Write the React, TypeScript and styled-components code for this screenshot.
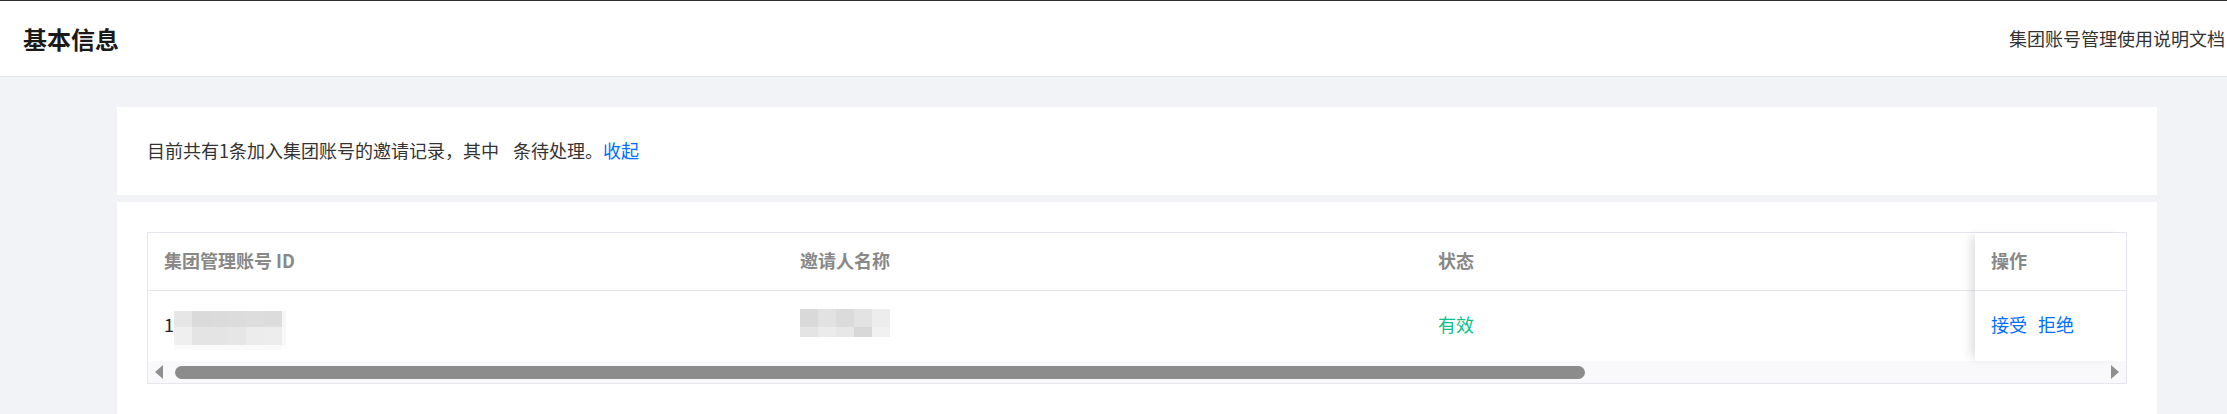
import React from "react";
import styled, { createGlobalStyle } from "styled-components";

const GlobalStyle = createGlobalStyle`
  html, body { margin: 0; padding: 0; }
  body {
    background: #f2f3f7;
    font-family: "Noto Sans CJK SC", "Liberation Sans", sans-serif;
    color: #333;
  }
  * { box-sizing: border-box; }
`;

const Page = styled.div`
  width: 2227px;
  min-height: 414px;
  background: #f2f3f7;
`;

const TopBar = styled.header`
  height: 77px;
  background: #fff;
  border-top: 1px solid #2f2f2f;
  border-bottom: 1px solid #e4e5ec;
  display: flex;
  align-items: center;
  justify-content: space-between;
  padding: 0 2px 0 23px;
`;

const Title = styled.h1`
  margin: 0;
  font-size: 24px;
  line-height: 32px;
  font-weight: 700;
  color: #1a1a1a;
`;

const DocLink = styled.a`
  font-size: 18px;
  line-height: 24px;
  color: #333;
  text-decoration: none;
  margin-top: -2px;
`;

const Main = styled.main`
  padding: 30px 70px 0 117px;
  display: flex;
  flex-direction: column;
  gap: 7px;
`;

const Card = styled.section<{ $pad: string }>`
  background: #fff;
  padding: ${(p) => p.$pad};
`;

const Notice = styled.p`
  margin: 0;
  height: 28px;
  font-size: 18px;
  line-height: 28px;
  color: #333;
  display: flex;
  align-items: center;
  padding-bottom: 3px;
`;

const Blank = styled.span`
  display: inline-block;
  width: 14px;
`;

const TextLink = styled.a`
  color: #006eff;
  text-decoration: none;
  cursor: pointer;
`;

const TableBox = styled.div`
  border: 1px solid #e6e7ee;
  display: flex;
  flex-direction: column;
  background: #fff;
`;

const TableBody = styled.div`
  display: flex;
`;

const ScrollPane = styled.div`
  flex: 1;
  min-width: 0;
  overflow: hidden;
`;

const GridRow = styled.div<{ $h: number; $line?: boolean }>`
  display: grid;
  grid-template-columns: 636px 638px 638px 638px;
  height: ${(p) => p.$h}px;
  border-bottom: ${(p) => (p.$line ? "1px solid #e6e7ee" : "none")};
`;

const HeadCell = styled.div`
  display: flex;
  align-items: center;
  padding: 0 16px 3px;
  font-size: 18px;
  font-weight: 700;
  color: #888;
  white-space: nowrap;
`;

const Cell = styled.div<{ $tone?: "ok" }>`
  display: flex;
  align-items: center;
  padding: 0 16px 4px;
  font-size: 18px;
  color: ${(p) => (p.$tone === "ok" ? "#0ac28c" : "#222")};
  white-space: nowrap;
`;

const FixedPane = styled.div`
  flex: none;
  width: 151px;
  position: relative;
  background: #fff;
  box-shadow: -7px 0 9px -3px rgba(0, 0, 0, 0.13);
  display: flex;
  flex-direction: column;
`;

const FixedHead = styled(HeadCell)`
  height: 58px;
  border-bottom: 1px solid #e6e7ee;
`;

const FixedCell = styled(Cell)`
  height: 70px;
  gap: 11px;
`;

const Mosaic = styled.span<{ $cols: string; $rows: string; $shift: number }>`
  display: inline-grid;
  grid-template-columns: ${(p) => p.$cols};
  grid-template-rows: ${(p) => p.$rows};
  transform: translateY(${(p) => p.$shift}px);
`;

const Pix = styled.span<{ $c: string }>`
  background: ${(p) => p.$c};
`;

const ScrollBar = styled.div`
  height: 22px;
  background: #f9f9fb;
  display: flex;
  align-items: center;
  padding: 0 7px 0 7px;
`;

const Arrow = styled.span<{ $dir: "left" | "right" }>`
  flex: none;
  width: 0;
  height: 0;
  border-top: 7px solid transparent;
  border-bottom: 7px solid transparent;
  ${(p) =>
    p.$dir === "left"
      ? "border-right: 8px solid #8f8f8f; margin-right: 12px;"
      : "border-left: 8px solid #8f8f8f; margin-left: 6px;"}
`;

const Track = styled.div`
  flex: 1;
  height: 13px;
  display: flex;
`;

const Thumb = styled.div<{ $ratio: number }>`
  width: ${(p) => p.$ratio * 100}%;
  height: 13px;
  border-radius: 7px;
  background: #8c8c8c;
`;

const idMosaic = [
  ["#e6e6e6", "#dadada", "#dbdbdb", "#dcdcdc", "#dddddd", "#dcdcdc", "#f6f6f6"],
  ["#efefef", "#e4e4e4", "#e4e4e4", "#e6e6e6", "#ececec", "#ededed", "#f8f8f8"],
  ["#fafafa", "#fafafa", "#fafafa", "#fafafa", "#fafafa", "#fafafa", "#fdfdfd"],
];

const nameMosaic = [
  ["#d9d9d9", "#e2e2e2", "#dbdbdb", "#e3e3e3", "#ededed"],
  ["#e4e4e4", "#ebebeb", "#e7e7e7", "#d8d8d8", "#f1f1f1"],
];

export default function App() {
  return (
    <Page>
      <GlobalStyle />
      <TopBar>
        <Title>基本信息</Title>
        <DocLink>集团账号管理使用说明文档</DocLink>
      </TopBar>
      <Main>
        <Card $pad="30px 30px 30px 30px">
          <Notice>
            目前共有1条加入集团账号的邀请记录，其中<Blank />条待处理。
            <TextLink>收起</TextLink>
          </Notice>
        </Card>
        <Card $pad="30px 30px 30px 30px">
          <TableBox>
            <TableBody>
              <ScrollPane>
                <GridRow $h={58} $line>
                  <HeadCell>集团管理账号 ID</HeadCell>
                  <HeadCell>邀请人名称</HeadCell>
                  <HeadCell>状态</HeadCell>
                  <HeadCell />
                </GridRow>
                <GridRow $h={70}>
                  <Cell>
                    1
                    <Mosaic $cols="repeat(6, 18px) 4px" $rows="16px 18px 5px" $shift={6}>
                      {idMosaic.flat().map((c, i) => (
                        <Pix key={i} $c={c} />
                      ))}
                    </Mosaic>
                  </Cell>
                  <Cell>
                    <Mosaic $cols="repeat(5, 18px)" $rows="18px 10px" $shift={-1}>
                      {nameMosaic.flat().map((c, i) => (
                        <Pix key={i} $c={c} />
                      ))}
                    </Mosaic>
                  </Cell>
                  <Cell $tone="ok">有效</Cell>
                  <Cell />
                </GridRow>
              </ScrollPane>
              <FixedPane>
                <FixedHead>操作</FixedHead>
                <FixedCell>
                  <TextLink>接受</TextLink>
                  <TextLink>拒绝</TextLink>
                </FixedCell>
              </FixedPane>
            </TableBody>
            <ScrollBar>
              <Arrow $dir="left" />
              <Track>
                <Thumb $ratio={0.7306} />
              </Track>
              <Arrow $dir="right" />
            </ScrollBar>
          </TableBox>
        </Card>
      </Main>
    </Page>
  );
}
